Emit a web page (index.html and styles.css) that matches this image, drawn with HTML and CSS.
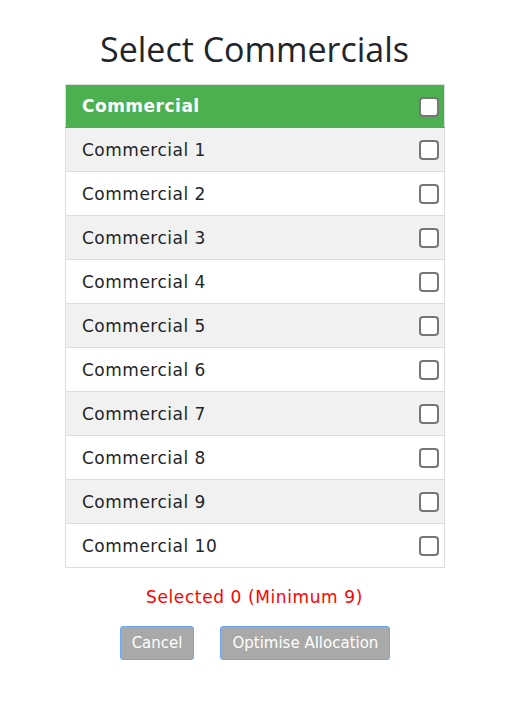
FILE: index.html
```html
<!DOCTYPE html>
<html>
<head>
<meta charset="utf-8">
<link rel="stylesheet" href="styles.css">
</head>
<body>
<div class="page">
  <h1 class="title">Select Commercials</h1>
  <table class="list">
    <thead>
      <tr class="head"><th>Commercial</th><td class="cb"><span class="box"></span></td></tr>
    </thead>
    <tbody>
      <tr><td>Commercial 1</td><td class="cb"><span class="box"></span></td></tr>
      <tr><td>Commercial 2</td><td class="cb"><span class="box"></span></td></tr>
      <tr><td>Commercial 3</td><td class="cb"><span class="box"></span></td></tr>
      <tr><td>Commercial 4</td><td class="cb"><span class="box"></span></td></tr>
      <tr><td>Commercial 5</td><td class="cb"><span class="box"></span></td></tr>
      <tr><td>Commercial 6</td><td class="cb"><span class="box"></span></td></tr>
      <tr><td>Commercial 7</td><td class="cb"><span class="box"></span></td></tr>
      <tr><td>Commercial 8</td><td class="cb"><span class="box"></span></td></tr>
      <tr><td>Commercial 9</td><td class="cb"><span class="box"></span></td></tr>
      <tr><td>Commercial 10</td><td class="cb"><span class="box"></span></td></tr>
    </tbody>
  </table>
  <p class="status">Selected 0 (Minimum 9)</p>
  <div class="actions">
    <button class="btn btn-cancel">Cancel</button>
    <button class="btn btn-opt">Optimise Allocation</button>
  </div>
</div>
</body>
</html>
```

FILE: styles.css
```css
html, body { margin: 0; padding: 0; background: #fff; }
.page {
  display: flex;
  flex-direction: column;
  align-items: center;
  padding-top: 28px;
}
.title {
  margin: 0 0 14px 0;
  font-family: "Open Sans", sans-serif;
  font-weight: 400;
  font-size: 34px;
  line-height: 42px;
  color: #212529;
}
.list {
  border-collapse: collapse;
  width: 380px;
  margin-left: 1px;
  font-family: "DejaVu Sans", sans-serif;
  font-size: 17px;
  letter-spacing: 0.5px;
  color: #212529;
  border: 1px solid #dcdcdc;
}
.list th, .list td {
  height: 43px;
  padding: 0 0 0 16px;
  text-align: left;
  vertical-align: middle;
  border-bottom: 1px solid #dcdcdc;
}
.list .head th, .list .head td {
  height: 42px;
  background: #4caf50;
  color: #fff;
  font-weight: bold;
  border-bottom: 1px solid #4caf50;
}
.list tbody tr:nth-child(odd) td { background: #f1f1f1; }
.list tbody tr:nth-child(even) td { background: #fff; }
.list td.cb {
  width: 26px;
  padding: 0 5px 0 0;
  text-align: right;
}
.box {
  display: inline-block;
  box-sizing: border-box;
  width: 20px;
  height: 20px;
  border: 2px solid #767676;
  border-radius: 4px;
  background: #fff;
  vertical-align: middle;
}
.status {
  margin: 19px 0 0 0;
  font-family: "DejaVu Sans", sans-serif;
  font-size: 17px;
  letter-spacing: 0.6px;
  line-height: 20px;
  color: #ff0000;
}
.actions {
  display: flex;
  gap: 26px;
  margin-top: 19px;
  margin-left: 1px;
}
.btn {
  font-family: "DejaVu Sans", sans-serif;
  font-size: 15px;
  color: #fff;
  background: #a9a9a9;
  border: 1px solid #6aa8f5;
  border-radius: 3px;
  height: 34px;
  padding: 0 11px;
}
```
